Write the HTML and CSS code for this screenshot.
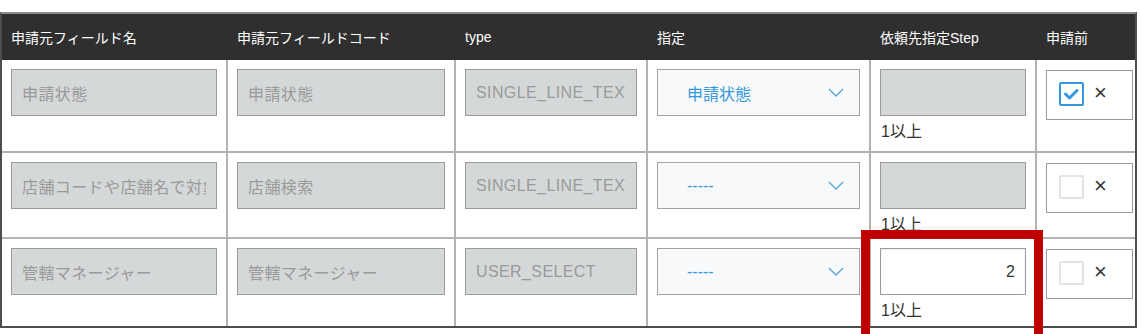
FILE: index.html
```html
<!DOCTYPE html>
<html>
<head>
    <title>申請元フィールド設定</title>
    <link rel="stylesheet" href="styles.css">
</head>
<body>
    <div class="page">
        <div class="field-table">
            <div class="th">申請元フィールド名</div>
            <div class="th">申請元フィールドコード</div>
            <div class="th">type</div>
            <div class="th">指定</div>
            <div class="th">依頼先指定Step</div>
            <div class="th last">申請前</div>

            <!-- row 1 -->
            <div class="td"><input class="form-control" type="text" value="申請状態" readonly></div>
            <div class="td"><input class="form-control" type="text" value="申請状態" readonly></div>
            <div class="td"><input class="form-control" type="text" value="SINGLE_LINE_TEXT" readonly></div>
            <div class="td">
                <div class="select-box">
                    <span class="select-text">申請状態</span>
                    <svg class="chevron" width="16" height="9" viewBox="0 0 16 9"><path d="M1 1 L8 8 L15 1" fill="none" stroke="#5aa7de" stroke-width="1.4"/></svg>
                </div>
            </div>
            <div class="td">
                <input class="form-control" type="text" value="" readonly>
                <div class="hint">1以上</div>
            </div>
            <div class="td last">
                <div class="check-wrap">
                    <span class="checkbox checked">
                        <svg width="21" height="20" viewBox="0 0 21 20"><path d="M4.5 10 L8.5 14 L16 6.5" fill="none" stroke="#3498db" stroke-width="3" stroke-linecap="round" stroke-linejoin="round"/></svg>
                    </span>
                    <span class="close">×</span>
                </div>
            </div>

            <!-- row 2 -->
            <div class="td"><input class="form-control" type="text" value="店舗コードや店舗名で対象店舗を検索" readonly></div>
            <div class="td"><input class="form-control" type="text" value="店舗検索" readonly></div>
            <div class="td"><input class="form-control" type="text" value="SINGLE_LINE_TEXT" readonly></div>
            <div class="td">
                <div class="select-box">
                    <span class="select-text">-----</span>
                    <svg class="chevron" width="16" height="9" viewBox="0 0 16 9"><path d="M1 1 L8 8 L15 1" fill="none" stroke="#5aa7de" stroke-width="1.4"/></svg>
                </div>
            </div>
            <div class="td">
                <input class="form-control" type="text" value="" readonly>
                <div class="hint">1以上</div>
            </div>
            <div class="td last">
                <div class="check-wrap">
                    <span class="checkbox"></span>
                    <span class="close">×</span>
                </div>
            </div>

            <!-- row 3 -->
            <div class="td bottom"><input class="form-control" type="text" value="管轄マネージャー" readonly></div>
            <div class="td bottom"><input class="form-control" type="text" value="管轄マネージャー" readonly></div>
            <div class="td bottom"><input class="form-control" type="text" value="USER_SELECT" readonly></div>
            <div class="td bottom">
                <div class="select-box">
                    <span class="select-text">-----</span>
                    <svg class="chevron" width="16" height="9" viewBox="0 0 16 9"><path d="M1 1 L8 8 L15 1" fill="none" stroke="#5aa7de" stroke-width="1.4"/></svg>
                </div>
            </div>
            <div class="td bottom">
                <input class="form-control editable" type="text" value="2">
                <div class="hint">1以上</div>
            </div>
            <div class="td bottom last">
                <div class="check-wrap">
                    <span class="checkbox"></span>
                    <span class="close">×</span>
                </div>
            </div>
        </div>

        <div class="highlight"></div>
    </div>
</body>
</html>
```

FILE: styles.css
```css
body {
    margin: 0;
    background: #fff;
    font-family: "Liberation Sans", "Noto Sans CJK JP", sans-serif;
    color: #333;
}
.page {
    position: relative;
    padding-top: 12px;
    height: 322px;
    overflow: hidden;
}
.field-table {
    width: 1137px;
    box-sizing: border-box;
    display: grid;
    grid-template-columns: 226px 228px 192px 223px 166px 98px;
    grid-template-rows: 46px 93px 86px 87px;
    border: 2px solid #4d4d4d;
    border-top-color: #8a8a8a;
}
.th {
    background: #2f2f2f;
    color: #fff;
    font-size: 14px;
    padding: 0 9px;
    display: flex;
    align-items: center;
    border-right: 2px solid #2f2f2f;
}
.td {
    box-sizing: border-box;
    padding: 9px 9px 0 9px;
    border-right: 2px solid #b3b3b3;
    border-bottom: 2px solid #b3b3b3;
}
.td:first-of-type {
    padding-left: 8px;
}
.th.last,
.td.last {
    border-right: none;
    padding-right: 0;
}
.td.bottom {
    border-bottom: none;
}
.form-control {
    display: block;
    width: 100%;
    height: 47px;
    box-sizing: border-box;
    margin: 0;
    padding: 0 10px;
    border: 1px solid #9b9b9b;
    border-radius: 0;
    background: #d4d8d8;
    color: #9a9a9a;
    font-family: inherit;
    font-size: 16px;
    letter-spacing: 0.4px;
    outline: none;
}
.form-control.editable {
    background: #fff;
    color: #333;
    text-align: right;
    letter-spacing: 0;
    box-shadow: inset 0 1px 3px rgba(0,0,0,0.08);
}
.hint {
    margin-top: 6px;
    padding-left: 1px;
    font-size: 16px;
    line-height: 20px;
    color: #333;
}
.select-box {
    height: 47px;
    box-sizing: border-box;
    border: 1px solid #a3a3a3;
    background: #f7f9fa;
    display: flex;
    align-items: center;
    padding: 0 15px 0 29px;
}
.select-text {
    flex: 1;
    color: #3498db;
    font-size: 16px;
}
.chevron {
    display: block;
}
.check-wrap {
    width: 87px;
    height: 50px;
    box-sizing: border-box;
    border: 1px solid #9b9b9b;
    background: #fff;
    display: flex;
    align-items: flex-start;
    padding: 11px 0 0 12px;
    margin-top: 1px;
}
.checkbox {
    width: 25px;
    height: 24px;
    box-sizing: border-box;
    border: 2px solid #e3e3e3;
    border-radius: 2px;
    display: flex;
    align-items: center;
    justify-content: center;
}
.checkbox.checked {
    border-color: #3498db;
}
.close {
    margin-left: 10px;
    font-size: 22px;
    line-height: 22px;
    color: #333;
}
.highlight {
    position: absolute;
    left: 861px;
    top: 230px;
    width: 182px;
    height: 120px;
    box-sizing: border-box;
    border: 9px solid #c00000;
}
```
